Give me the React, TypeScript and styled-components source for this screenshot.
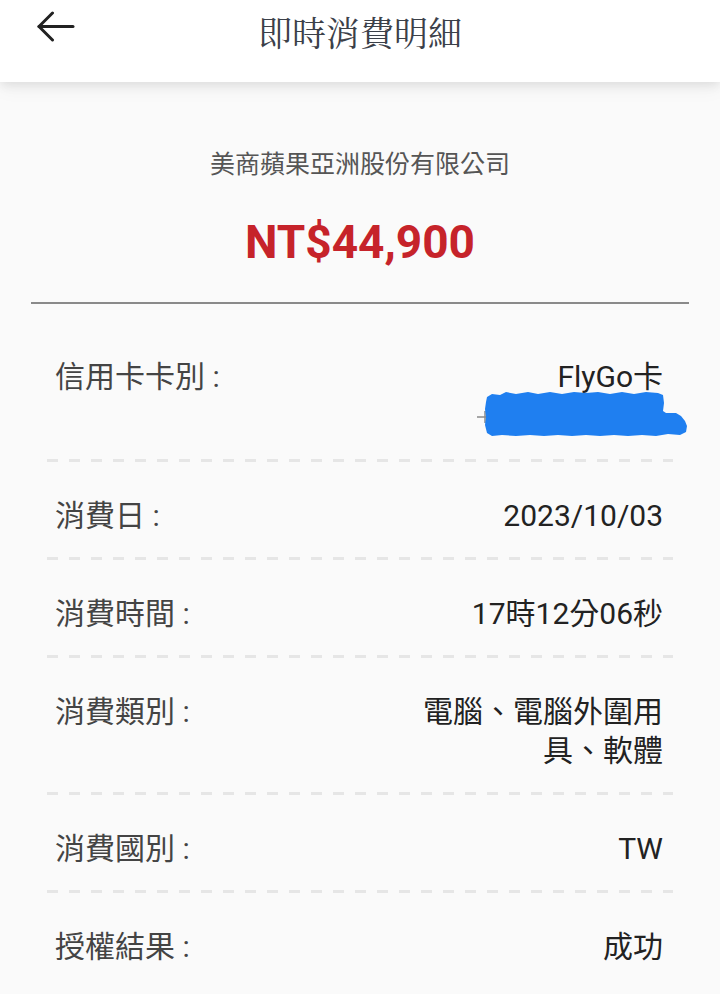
import React from "react";
import styled, { createGlobalStyle } from "styled-components";

const Global = createGlobalStyle`
  html, body { margin: 0; padding: 0; background: #fafafa; }
  body { font-family: Roboto, "Noto Sans CJK TC", sans-serif; }
  * { box-sizing: border-box; }
`;

const Page = styled.div`
  width: 720px;
  min-height: 994px;
  background: #fafafa;
  overflow: hidden;
`;

const Header = styled.header`
  height: 82px;
  background: #ffffff;
  display: grid;
  grid-template-columns: 1fr auto 1fr;
  align-items: start;
  padding: 0 37px;
  box-shadow: 0 3px 10px rgba(0, 0, 0, 0.09), 0 8px 18px rgba(0, 0, 0, 0.04);
  position: relative;
  z-index: 1;
`;

const BackButton = styled.button`
  justify-self: start;
  margin-top: 11px;
  width: 38px;
  height: 32px;
  padding: 0;
  border: none;
  background: transparent;
  display: flex;
  align-items: center;
`;

const Title = styled.h1`
  margin: 10px 0 0;
  font-family: "Noto Serif CJK TC", "Noto Sans CJK TC", serif;
  font-weight: 400;
  font-size: 34px;
  line-height: 44px;
  color: #3b4049;
  letter-spacing: 0;
`;

const Summary = styled.section`
  display: flex;
  flex-direction: column;
  align-items: center;
  padding-top: 66px;
`;

const Merchant = styled.div`
  font-family: Roboto, "Noto Sans CJK TC", sans-serif;
  font-size: 25px;
  line-height: 34px;
  color: #555555;
`;

const Amount = styled.div`
  margin-top: 33px;
  font-family: Roboto, "Noto Sans CJK TC", sans-serif;
  font-weight: 700;
  font-size: 46px;
  line-height: 54px;
  color: #c6232a;
`;

const SolidRule = styled.hr`
  margin: 33px 31px 0;
  border: none;
  height: 2px;
  background: #8a8a8a;
`;

const List = styled.div`
  padding: 0 47px;
`;

const Row = styled.div<{ $first?: boolean }>`
  display: flex;
  justify-content: space-between;
  align-items: flex-start;
  padding: ${(p) => (p.$first ? "53px 10px 24px 8px" : "34px 10px 22px 8px")};
  font-size: 30px;
  line-height: 39px;
`;

const Dashed = styled.div`
  height: 3px;
  background: repeating-linear-gradient(
    to right,
    #e6e6e6 0,
    #e6e6e6 11px,
    transparent 11px,
    transparent 22px
  );
`;

const Label = styled.div`
  font-family: Roboto, "Noto Sans CJK TC", sans-serif;
  color: #444444;
  white-space: nowrap;
`;

const Value = styled.div`
  display: flex;
  flex-direction: column;
  align-items: flex-end;
  text-align: right;
  max-width: 262px;
  font-family: Roboto, "Noto Sans CJK TC", sans-serif;
  color: #222222;
`;

const Redaction = styled.svg`
  display: block;
  margin-top: -5px;
  margin-right: -25px;
  margin-bottom: -2px;
`;

const BackArrow = () => (
  <svg width="38" height="32" viewBox="0 0 38 32" fill="none">
    <path d="M2 15.5 H36" stroke="#222" strokeWidth="3" strokeLinecap="round" />
    <path
      d="M15.5 2 L2 15.5 L15.5 29"
      stroke="#222"
      strokeWidth="3"
      strokeLinecap="round"
      strokeLinejoin="round"
    />
  </svg>
);

const CardMask = () => (
  <Redaction width="212" height="46" viewBox="0 0 212 46">
    <path d="M1 26 H14 M9 20 V32" stroke="#8a8a8a" strokeWidth="1.5" />
    <path
      fill="#1f7ff0"
      d="M11 6 L16 3 L24 4 L30 1 L40 3 L52 1 L62 3 L74 1 L86 3 L98 1 L110 2 L122 1 L134 3 L146 1 L158 3 L170 1 L182 2 L187 4 L188 12 L187 20 L190 22 L200 22 L205 25 L209 30 L211 35 L210 41 L204 44 L192 43 L180 45 L166 44 L152 45 L138 44 L124 45 L110 44 L96 45 L82 44 L68 45 L54 44 L40 45 L26 44 L16 45 L11 42 L9 34 L10 26 L9 18 L10 11 Z"
    />
  </Redaction>
);

const rows: { label: string; value: React.ReactNode }[] = [
  { label: "消費日 :", value: "2023/10/03" },
  { label: "消費時間 :", value: "17時12分06秒" },
  { label: "消費類別 :", value: "電腦、電腦外圍用具、軟體" },
  { label: "消費國別 :", value: "TW" },
  { label: "授權結果 :", value: "成功" },
];

export default function App() {
  return (
    <Page>
      <Global />
      <Header>
        <BackButton aria-label="back">
          <BackArrow />
        </BackButton>
        <Title>即時消費明細</Title>
        <div />
      </Header>
      <Summary>
        <Merchant>美商蘋果亞洲股份有限公司</Merchant>
        <Amount>NT$44,900</Amount>
      </Summary>
      <SolidRule />
      <List>
        <Row $first>
          <Label>信用卡卡別 :</Label>
          <Value>
            <span>FlyGo卡</span>
            <CardMask />
          </Value>
        </Row>
        {rows.map((r) => (
          <React.Fragment key={r.label}>
            <Dashed />
            <Row>
              <Label>{r.label}</Label>
              <Value>{r.value}</Value>
            </Row>
          </React.Fragment>
        ))}
      </List>
    </Page>
  );
}
